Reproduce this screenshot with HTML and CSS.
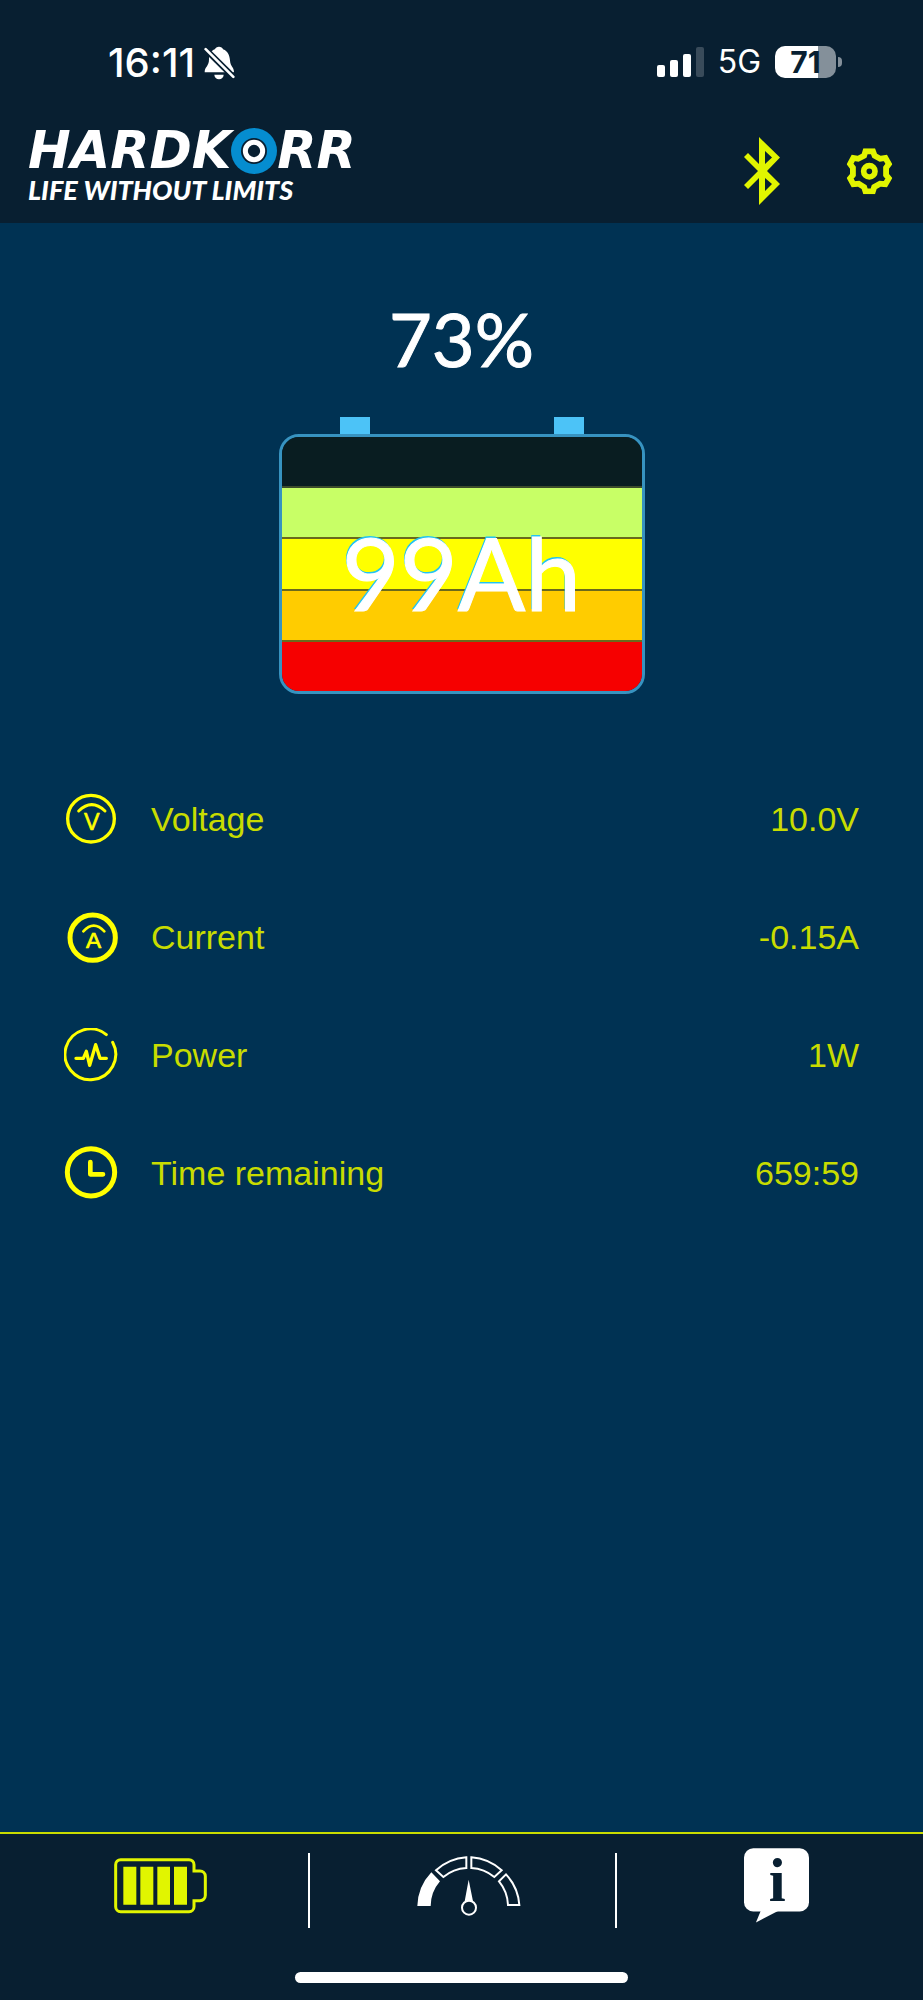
FILE: index.html
```html
<!DOCTYPE html>
<html lang="en">
<head>
<meta charset="utf-8">
<meta name="viewport" content="width=device-width, initial-scale=1">
<title>Hardkorr battery monitor</title>
<link rel="stylesheet" href="styles.css">
</head>
<body>
<header class="top">
  <div class="status">
    <div class="status-group">
      <span class="clock">16:11</span>
      <svg class="bell" viewBox="619 79 93 101" aria-hidden="true">
        <path fill="#fff" d="M621 157C621 140 634 140 634 118C634 98 644 90 652 88C654 78 674 78 676 88C692 94 696 108 697 122C698 140 709 142 709 157ZM650 165H678A14 13 0 0 1 650 165Z"/>
        <path stroke="#081f31" stroke-width="18" d="M620 85L712 176"/>
        <path stroke="#fff" stroke-width="8" stroke-linecap="round" d="M624 88L707 171"/>
      </svg>
    </div>
    <div class="status-group status-right">
      <svg class="signal" viewBox="0 0 47 30" aria-hidden="true">
        <g fill="#fff"><rect y="18" width="8" height="12" rx="2"/><rect x="13" y="13" width="8" height="17" rx="2"/><rect x="26" y="7" width="8" height="23" rx="2"/></g>
        <rect x="39" width="8" height="30" rx="2" fill="#394b5a"/>
      </svg>
      <span class="network">5G</span>
      <span class="phone-battery"><span class="phone-level">71</span><span class="phone-nub"></span></span>
    </div>
  </div>
  <div class="bar">
    <div class="brand">
      <div class="wordmark">
        <span>HARDK</span>
        <svg class="ring" viewBox="0 0 138 138" role="img" aria-label="O">
          <circle cx="69" cy="69" r="69" fill="#058dd0"/><circle cx="69" cy="69" r="39" fill="#081f31"/>
          <circle cx="69" cy="69" r="26" fill="none" stroke="#fff" stroke-width="15"/>
        </svg>
        <span>RR</span>
      </div>
      <div class="tagline">LIFE WITHOUT LIMITS</div>
    </div>
    <div class="actions">
      <button class="icon-button" type="button" aria-label="Bluetooth">
        <svg class="bluetooth" viewBox="0 0 36 68"><path fill="#e1f500" fill-rule="evenodd" d="M15 0L36 20.500L23 34L36 47L15 68V41L4 52L0 48L14 34L0 20L4 16L15 27ZM21 14V27L28 20.500ZM21 41V54L28 47Z"/></svg>
      </button>
      <button class="icon-button" type="button" aria-label="Settings">
        <svg class="gear" viewBox="738 379 141 141">
          <clipPath id="gear-edge"><path d="M790 380H825L831 396L842 402L861 399L877 428L867 441V457L877 469L861 497L842 495L830 502L825 518H790L785 502L774 495L755 497L740 469L750 457V441L740 428L755 399L773 402L785 396Z"/></clipPath>
          <path clip-path="url(#gear-edge)" fill="none" stroke="#e1f500" stroke-width="35" d="M790 380H825L831 396L842 402L861 399L877 428L867 441V457L877 469L861 497L842 495L830 502L825 518H790L785 502L774 495L755 497L740 469L750 457V441L740 428L755 399L773 402L785 396Z"/>
          <circle cx="808" cy="449" r="17" fill="none" stroke="#e1f500" stroke-width="17"/>
        </svg>
      </button>
    </div>
  </div>
</header>

<main class="main">
  <p class="percent">73%</p>
  <div class="battery">
    <div class="terminals"><span></span><span></span></div>
    <div class="cells">
      <span class="cell cell-empty"></span>
      <span class="cell cell-green"></span>
      <span class="cell cell-yellow"></span>
      <span class="cell cell-orange"></span>
      <span class="cell cell-red"></span>
      <strong class="capacity">99Ah</strong>
    </div>
  </div>

  <dl class="readouts">
    <div class="readout">
      <svg class="readout-icon" viewBox="0 0 162 162" aria-hidden="true">
        <circle cx="81" cy="80" r="70" stroke-width="10"/>
        <path stroke-width="9" d="M44 57Q83 19 123 57"/>
        <text x="83" y="115" font-size="70">V</text>
      </svg>
      <dt>Voltage</dt><dd>10.0V</dd>
    </div>
    <div class="readout">
      <svg class="readout-icon" viewBox="0 0 162 162" aria-hidden="true">
        <circle cx="86" cy="83" r="68" stroke-width="15"/>
        <path stroke-width="8" d="M58 64Q89 30 121 64"/>
        <text x="89" y="113" font-size="68">A</text>
      </svg>
      <dt>Current</dt><dd>-0.15A</dd>
    </div>
    <div class="readout">
      <svg class="readout-icon" viewBox="0 0 162 162" aria-hidden="true">
        <path stroke-width="9" d="M146 43A76 76 0 1 1 127 20"/>
        <path stroke-width="10" d="M36 91H58L67 70L77 112L95 50L108 91H127"/>
      </svg>
      <dt>Power</dt><dd>1W</dd>
    </div>
    <div class="readout">
      <svg class="readout-icon" viewBox="0 0 162 162" aria-hidden="true">
        <circle cx="81" cy="79" r="71" stroke-width="15"/>
        <path stroke-width="14" d="M79 48V85H117"/>
      </svg>
      <dt>Time remaining</dt><dd>659:59</dd>
    </div>
  </dl>
</main>

<footer class="bottom">
  <nav class="tabs">
    <button class="tab" type="button" aria-label="Battery">
      <svg class="tab-battery" viewBox="342 112 279 168">
        <path fill="none" stroke="#e1f500" stroke-width="9" d="M362 117H567A15 15 0 0 1 582 132V151H600A16 16 0 0 1 616 167V224A16 16 0 0 1 600 240H582V258A15 15 0 0 1 567 273H362A15 15 0 0 1 347 258V132A15 15 0 0 1 362 117Z"/>
        <path fill="#e1f500" d="M370 138H409V252H370ZM421 138H460V252H421ZM472 138H510V252H472ZM522 138H561V252H522Z"/>
      </svg>
    </button>
    <span class="divider"></span>
    <button class="tab" type="button" aria-label="Gauge">
      <svg class="tab-gauge" viewBox="1248 107 312 180">
        <path fill="#fff" d="M1249 257A154 154 0 0 1 1291 156L1317 183A115 115 0 0 0 1289 257ZM1403 178L1391 243H1416Z"/>
        <g fill="none" stroke="#fff" stroke-width="6"><path d="M1305 150A151 151 0 0 1 1396 111V143A118 118 0 0 0 1327 170ZM1502 150A151 151 0 0 0 1411 111V143A118 118 0 0 1 1480 170ZM1515 162A151 151 0 0 1 1555 254H1521A118 118 0 0 0 1494 183Z"/><circle cx="1404" cy="262" r="21" fill="#081f31"/></g>
      </svg>
    </button>
    <span class="divider"></span>
    <button class="tab" type="button" aria-label="Information">
      <svg class="tab-info" viewBox="846 84 196 225">
        <rect x="846" y="84" width="196" height="191" rx="28" fill="#fff"/><path fill="#fff" d="M900 264L882 308L950 273Z"/>
        <text x="946" y="244" font-size="184">i</text>
      </svg>
    </button>
  </nav>
  <div class="home-indicator"></div>
</footer>
</body>
</html>
```
FILE: styles.css
```css
* { box-sizing: border-box; }

body {
  margin: 0;
  min-height: 100vh;
  display: flex;
  flex-direction: column;
  background: #003253;
  color: #fff;
  font-family: "Liberation Sans", Arial, sans-serif;
}

button { padding: 0; border: 0; background: none; cursor: pointer; }
svg { display: block; flex: none; }

/* Status bar and app bar */
.top { background: #081f31; padding-bottom: 18px; }
.status {
  display: flex;
  justify-content: space-between;
  padding: 40px 81px 0 108px;
  font-family: Inter, sans-serif;
}
.status-group { display: flex; align-items: center; gap: 9px; height: 46px; }
.status-right { gap: 14px; height: 44px; }
.clock { font-size: 40px; font-weight: 500; line-height: 46px; }
.bell { width: 31px; height: 34px; }
.signal { width: 47px; height: 30px; }
.network { font-size: 32px; line-height: 44px; }
.phone-battery { display: flex; align-items: center; gap: 2px; }
.phone-level {
  width: 61px;
  height: 32px;
  border-radius: 10px;
  background: linear-gradient(90deg, #fff 71%, #84909a 71%);
  color: #081f31;
  font-size: 30px;
  font-weight: 700;
  line-height: 32px;
  text-align: center;
}
.phone-nub { width: 4px; height: 10px; border-radius: 0 4px 4px 0; background: #84909a; }

.bar {
  display: flex;
  justify-content: space-between;
  align-items: flex-end;
  padding: 42px 30px 0 28px;
}
.wordmark {
  display: flex;
  align-items: center;
  height: 46px;
  font: italic 700 51px/46px "DejaVu Sans", sans-serif;
}
.ring { width: 46px; height: 46px; }
.tagline { font: italic 900 27px/31px Lato, sans-serif; }
.actions { display: flex; align-items: center; gap: 66px; }
.bluetooth { width: 36px; height: 68px; }
.gear { width: 47px; height: 47px; }

/* State of charge */
.main {
  flex: 1;
  display: flex;
  flex-direction: column;
  align-items: center;
  padding-top: 70px;
}
.percent {
  margin: 0;
  font: 400 74px/92px Lato, sans-serif;
  -webkit-text-stroke: 1px #fff;
}
.battery { width: 366px; padding-top: 32px; }
.terminals { display: flex; justify-content: space-between; padding: 0 61px; }
.terminals span { width: 30px; height: 17px; background: #4cc3f7; }
.cells {
  position: relative;
  display: flex;
  flex-direction: column;
  height: 260px;
  border: 3px solid #3793c0;
  border-radius: 20px;
  overflow: hidden;
}
.cell { flex: 1; border-bottom: 2px solid #6b6a1c; }
.cell-empty { background: #091d21; border-color: #3c4c2c; }
.cell-green { background: #c8ff66; }
.cell-yellow { background: #ff0; }
.cell-orange { background: #fc0; }
.cell-red { background: #f60000; border: 0; }
.capacity {
  position: absolute;
  inset: 8px 0 0;
  font: 400 100px/254px Lato, sans-serif;
  text-align: center;
  text-shadow: -1px -2px 0 #22c4f2;
  -webkit-text-stroke: 1px #fff;
}

/* Readouts */
.readouts { align-self: stretch; margin: 66px 0 0; padding: 0 64px; }
.readout {
  display: flex;
  align-items: center;
  height: 118px;
  color: #c8dc00;
  font-size: 34px;
  line-height: 40px;
}
.readout-icon {
  width: 54px;
  height: 54px;
  margin-right: 33px;
  fill: none;
  stroke: #ff0;
  stroke-linecap: round;
  stroke-linejoin: round;
}
.readout-icon text {
  fill: #ff0;
  stroke-width: 2;
  text-anchor: middle;
  font-family: "Liberation Sans", Arial, sans-serif;
}
.readout dd { margin: 0 0 0 auto; }

/* Bottom navigation */
.bottom { border-top: 2px solid #c8dc00; background: #081f31; padding-bottom: 17px; }
.tabs { display: flex; height: 103px; padding-left: 2px; }
.tab { flex: 1; display: flex; align-items: center; justify-content: center; padding-left: 12px; }
.divider { width: 2px; height: 75px; margin-top: 19px; background: #fff; }
.tab-battery { width: 93px; height: 56px; }
.tab-gauge { width: 104px; height: 60px; }
.tab-info { width: 65px; height: 75px; }
.tab-info text {
  fill: #081f31;
  text-anchor: middle;
  font-family: "Liberation Serif", serif;
  font-weight: 700;
}
.home-indicator { width: 36%; height: 11px; margin: 35px auto 0; border-radius: 6px; background: #fff; }
```
